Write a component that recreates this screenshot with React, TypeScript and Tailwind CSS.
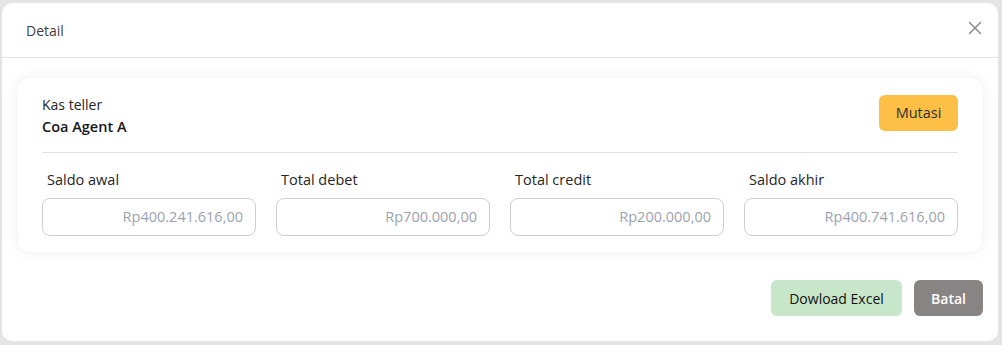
import { X } from 'lucide-react';

const summary = [
  { label: 'Saldo awal', value: 'Rp400.241.616,00' },
  { label: 'Total debet', value: 'Rp700.000,00' },
  { label: 'Total credit', value: 'Rp200.000,00' },
  { label: 'Saldo akhir', value: 'Rp400.741.616,00' },
];

export default function App() {
  return (
    <div
      className="h-[345px] w-[1002px] bg-[#e4e4e4] pt-[3px] pl-[2px] pr-[4px] pb-[4px]"
      style={{ fontFamily: '"Open Sans", "Noto Sans", sans-serif' }}
    >
      <div className="flex h-[338px] flex-col rounded-[10px] bg-white">
        {/* Header */}
        <div className="flex h-[55px] items-center justify-between border-b border-[#e5e5e5] pl-6 pr-[12px]">
          <h1 className="text-[14px] text-[#3f3f46]">Detail</h1>
          <button className="mb-[5px] text-[#8b8b8b]">
            <X size={22} strokeWidth={1.6} />
          </button>
        </div>

        {/* Body */}
        <div className="px-4 pt-[20px]">
          <div className="rounded-xl bg-white px-6 pt-[16px] pb-[16px] shadow-[0_0_14px_rgba(0,0,0,0.07)]">
            <div className="flex items-start justify-between border-b border-[#e3e3e3] pb-[15px]">
              <div className="pt-[1px]">
                <p className="text-[14px] leading-[20px] text-[#262626]">Kas teller</p>
                <p className="mt-[2px] text-[14.5px] font-semibold leading-[20px] text-[#171717]">Coa Agent A</p>
              </div>
              <button className="mt-[1px] h-[36px] w-[79px] rounded-md bg-[#fdbf46] text-[14.5px] text-[#2f2f2f]">
                Mutasi
              </button>
            </div>

            <div className="mt-[17px] grid grid-cols-4 gap-5">
              {summary.map((item) => (
                <div key={item.label}>
                  <p className="pl-[5px] text-[14.5px] leading-[20px] text-[#262626]">{item.label}</p>
                  <div className="mt-[8px] flex h-[38px] items-center justify-end rounded-lg border border-[#cfcfcf] px-3">
                    <span className="text-[14.5px] text-[#9ca3af]">{item.value}</span>
                  </div>
                </div>
              ))}
            </div>
          </div>
        </div>

        {/* Footer */}
        <div className="mt-auto flex justify-end gap-3 pr-[15px] pb-[25px]">
          <button className="h-[36px] w-[131px] rounded-md bg-[#c8e6c9] text-[14px] font-medium text-[#111111]">
            Dowload Excel
          </button>
          <button className="h-[36px] w-[69px] rounded-md bg-[#888484] text-[14px] font-semibold text-white">
            Batal
          </button>
        </div>
      </div>
    </div>
  );
}
